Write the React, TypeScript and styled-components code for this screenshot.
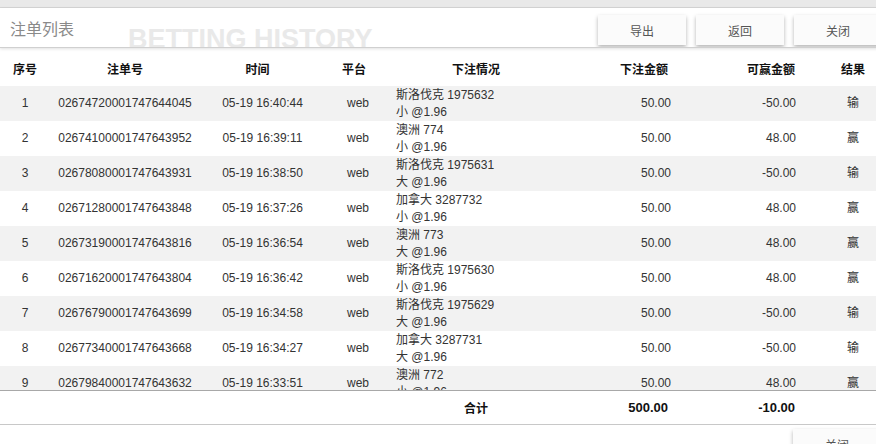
import * as React from 'react';
import styled, { createGlobalStyle } from 'styled-components';

const GlobalStyle = createGlobalStyle`
  html, body {
    margin: 0;
    padding: 0;
    overflow: hidden;
    background: #fff;
  }
  body {
    font-family: "Liberation Sans", "Noto Sans CJK SC", sans-serif;
    font-size: 12px;
    color: #333;
  }
`;

const COLS = '50px 150px 115px 70px 182px 113px 126px 94px';

const Page = styled.div`
  width: 900px;
  display: flex;
  flex-direction: column;
`;

const TopStrip = styled.div`
  height: 7px;
  background: #e9e9e9;
  border-bottom: 1px solid #d6d6d6;
`;

const Header = styled.div`
  position: relative;
  height: 39px;
  display: flex;
  align-items: center;
  padding: 0 18px 0 10px;
  border-bottom: 1px solid #d0d0d0;
  box-shadow: 0 1px 3px rgba(0, 0, 0, 0.12);
  z-index: 1;
  background: #fff;
  overflow: hidden;
`;

const Title = styled.div`
  font-family: "Noto Sans CJK SC", sans-serif;
  font-size: 16px;
  color: #8a8a8a;
  flex: 1;
`;

const Watermark = styled.div`
  position: absolute;
  left: 128px;
  top: 16px;
  font-family: "Liberation Sans", sans-serif;
  font-weight: bold;
  font-size: 27px;
  color: #e9e9e9;
  pointer-events: none;
`;

const Buttons = styled.div`
  display: flex;
  gap: 10px;
  margin-top: 5px;
  position: relative;
`;

const Button = styled.button`
  width: 88px;
  height: 30px;
  border: none;
  background: #fbfbfb;
  box-shadow: 0 2px 4px rgba(0, 0, 0, 0.3);
  font-family: "Noto Sans CJK SC", sans-serif;
  font-size: 12px;
  color: #555;
  cursor: pointer;
`;

const Row = styled.div<{ $bg?: string; $h?: number }>`
  display: grid;
  grid-template-columns: ${COLS};
  height: ${(p) => p.$h ?? 35}px;
  background: ${(p) => p.$bg ?? '#fff'};
  align-items: center;
`;

const HeadRow = styled(Row)`
  margin-top: 2px;
  font-family: "Noto Sans CJK SC", sans-serif;
  font-weight: bold;
  color: #111;
`;

const Cell = styled.div<{ $align?: 'left' | 'center' | 'right'; $shift?: number }>`
  text-align: ${(p) => p.$align ?? 'center'};
  padding: ${(p) =>
    p.$align === 'right' ? `0 ${p.$shift ?? 9}px 0 0` : p.$align === 'left' ? '0 0 0 11px' : `0 0 0 ${p.$shift ?? 0}px`};
  white-space: nowrap;
  line-height: 17px;
`;

const Body = styled.div`
  height: 304px;
  overflow: hidden;
`;

const Footer = styled(Row)`
  border-top: 1px solid #a8a8a8;
  border-bottom: 1px solid #c8c8c8;
  font-weight: bold;
  font-size: 13px;
  color: #111;
`;

const FootLabel = styled(Cell)`
  font-family: "Noto Sans CJK SC", sans-serif;
  font-size: 12px;
`;

const BottomBar = styled.div`
  display: flex;
  justify-content: flex-end;
  padding: 4px 19px 0 0;
`;

type Bet = {
  id: string;
  time: string;
  match: string;
  pick: string;
  win: string;
  result: string;
};

const bets: Bet[] = [
  { id: '02674720001747644045', time: '05-19 16:40:44', match: '斯洛伐克 1975632', pick: '小 @1.96', win: '-50.00', result: '输' },
  { id: '02674100001747643952', time: '05-19 16:39:11', match: '澳洲 774', pick: '小 @1.96', win: '48.00', result: '赢' },
  { id: '02678080001747643931', time: '05-19 16:38:50', match: '斯洛伐克 1975631', pick: '大 @1.96', win: '-50.00', result: '输' },
  { id: '02671280001747643848', time: '05-19 16:37:26', match: '加拿大 3287732', pick: '小 @1.96', win: '48.00', result: '赢' },
  { id: '02673190001747643816', time: '05-19 16:36:54', match: '澳洲 773', pick: '大 @1.96', win: '48.00', result: '赢' },
  { id: '02671620001747643804', time: '05-19 16:36:42', match: '斯洛伐克 1975630', pick: '小 @1.96', win: '48.00', result: '赢' },
  { id: '02676790001747643699', time: '05-19 16:34:58', match: '斯洛伐克 1975629', pick: '大 @1.96', win: '-50.00', result: '输' },
  { id: '02677340001747643668', time: '05-19 16:34:27', match: '加拿大 3287731', pick: '大 @1.96', win: '-50.00', result: '输' },
  { id: '02679840001747643632', time: '05-19 16:33:51', match: '澳洲 772', pick: '小 @1.96', win: '48.00', result: '赢' },
  { id: '02672950001747643590', time: '05-19 16:33:02', match: '加拿大 3287730', pick: '大 @1.96', win: '-50.00', result: '输' },
];

export default function App() {
  return (
    <>
      <GlobalStyle />
      <Page>
        <TopStrip />
        <Header>
          <Title>注单列表</Title>
          <Watermark>BETTING HISTORY</Watermark>
          <Buttons>
            <Button>导出</Button>
            <Button>返回</Button>
            <Button>关闭</Button>
          </Buttons>
        </Header>
        <HeadRow $h={36}>
          <Cell>序号</Cell>
          <Cell>注单号</Cell>
          <Cell>时间</Cell>
          <Cell $shift={8}>平台</Cell>
          <Cell>下注情况</Cell>
          <Cell $align="right" $shift={12}>下注金额</Cell>
          <Cell $align="right" $shift={11}>可赢金额</Cell>
          <Cell>结果</Cell>
        </HeadRow>
        <Body>
          {bets.map((b, i) => (
            <Row key={b.id} $bg={i % 2 === 0 ? '#f2f2f2' : '#fff'}>
              <Cell>{i + 1}</Cell>
              <Cell>{b.id}</Cell>
              <Cell $shift={10}>{b.time}</Cell>
              <Cell $shift={16}>web</Cell>
              <Cell $align="left">
                {b.match}
                <br />
                {b.pick}
              </Cell>
              <Cell $align="right">50.00</Cell>
              <Cell $align="right" $shift={10}>{b.win}</Cell>
              <Cell>{b.result}</Cell>
            </Row>
          ))}
        </Body>
        <Footer $h={33}>
          <Cell />
          <Cell />
          <Cell />
          <Cell />
          <FootLabel>合计</FootLabel>
          <Cell $align="right" $shift={12}>500.00</Cell>
          <Cell $align="right" $shift={11}>-10.00</Cell>
          <Cell />
        </Footer>
        <BottomBar>
          <Button>关闭</Button>
        </BottomBar>
      </Page>
    </>
  );
}
